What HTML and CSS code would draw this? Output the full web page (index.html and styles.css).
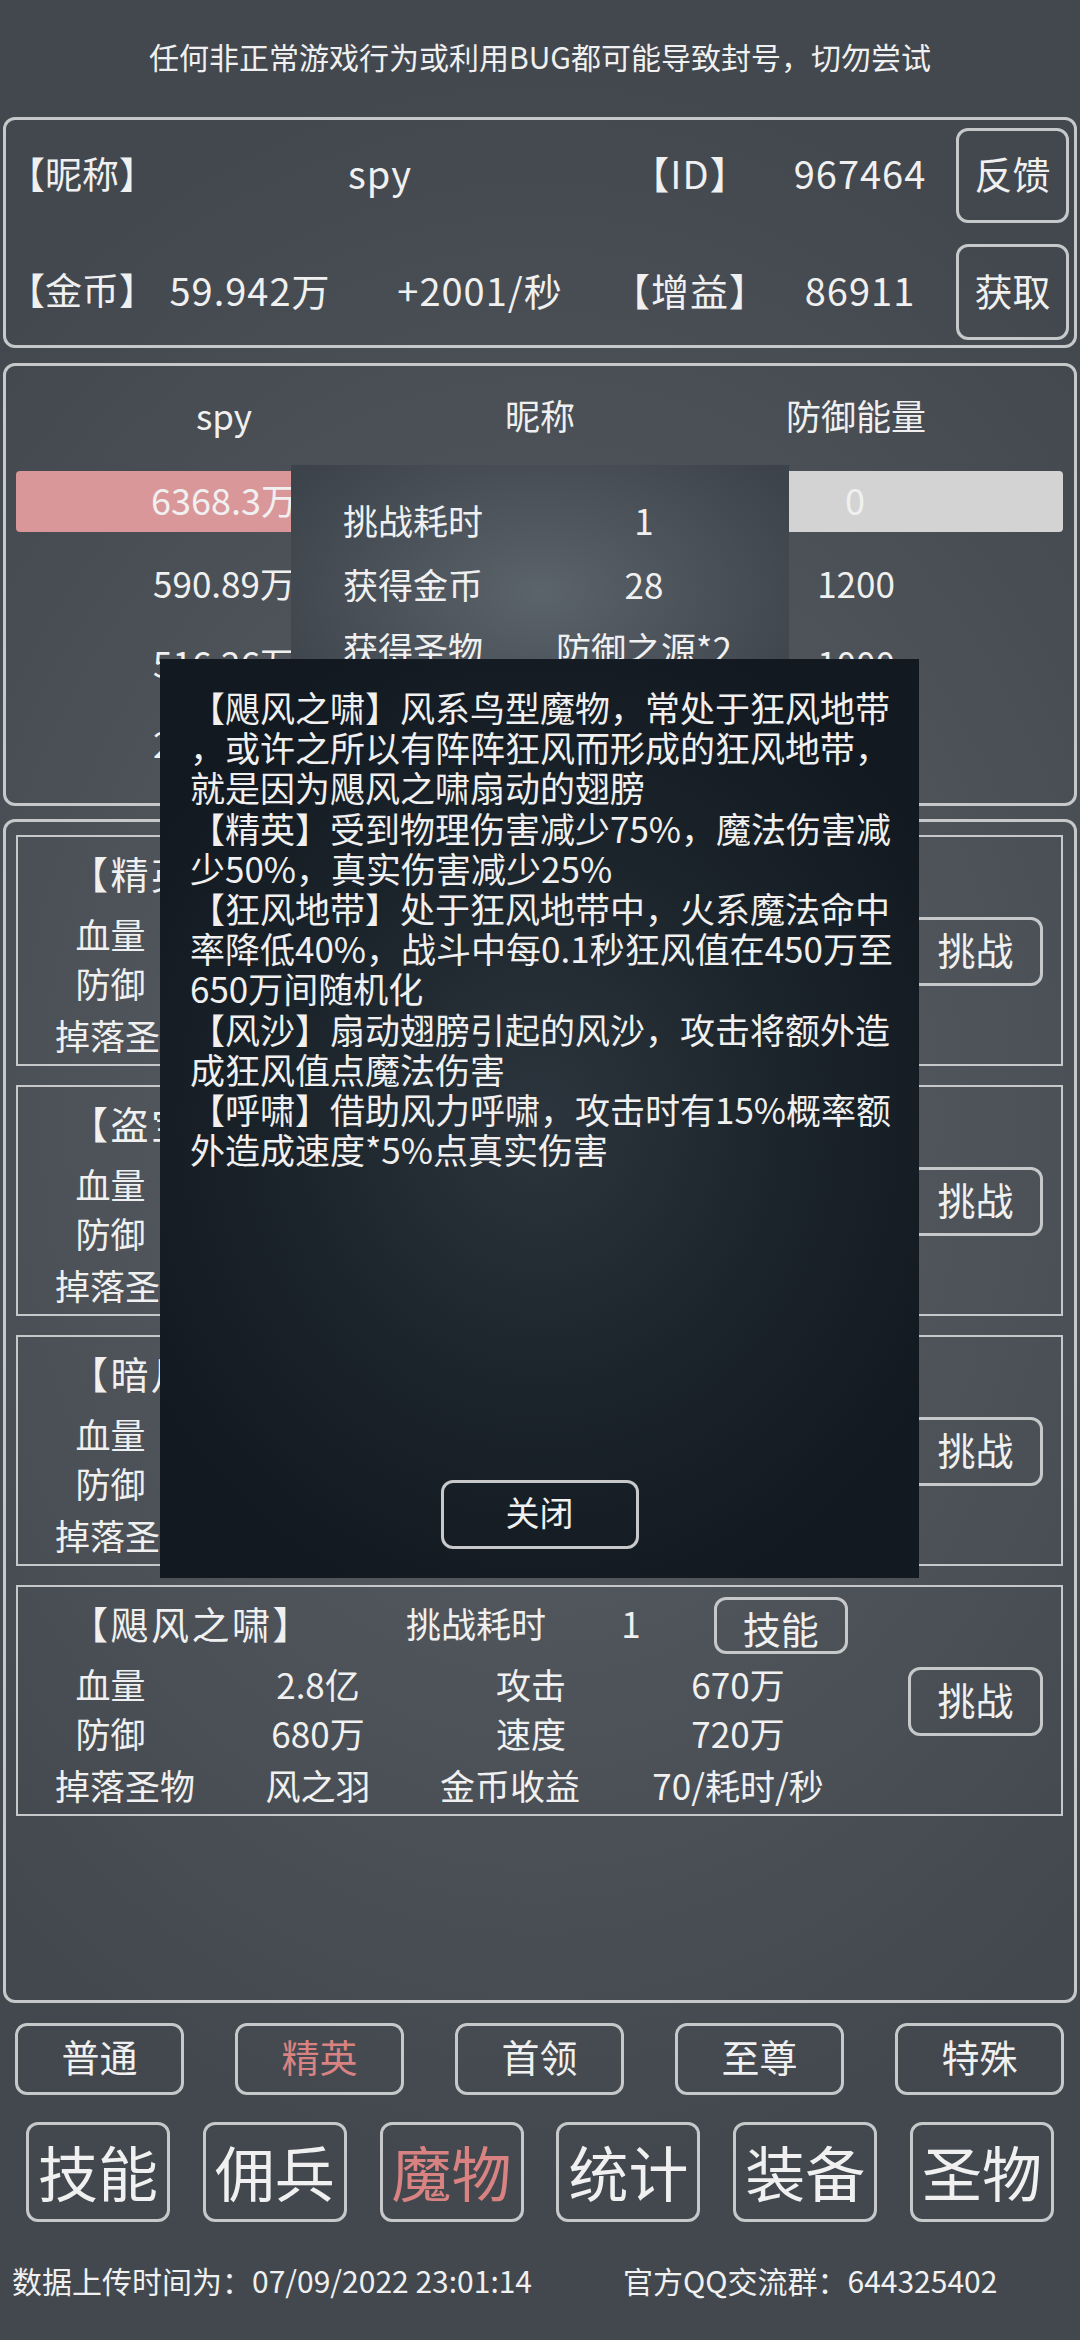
FILE: index.html
```html
<!DOCTYPE html>
<html lang="zh-CN">
<head>
    <meta charset="UTF-8">
    <meta name="viewport" content="width=device-width, initial-scale=1.0">
    <title>魔物</title>
    <link rel="stylesheet" href="styles.css">
</head>
<body>
    <div class="notice">任何非正常游戏行为或利用BUG都可能导致封号，切勿尝试</div>

    <div class="panel info">
        <div class="label">【昵称】</div>
        <div class="val span2">spy</div>
        <div class="val">【ID】</div>
        <div class="val">967464</div>
        <button class="btn side-btn">反馈</button>

        <div class="label">【金币】</div>
        <div class="val">59.942万</div>
        <div class="val">+2001/秒</div>
        <div class="val">【增益】</div>
        <div class="val">86911</div>
        <button class="btn side-btn">获取</button>
    </div>

    <div class="panel battle">
        <div class="b-row head"><div>spy</div><div>昵称</div><div>防御能量</div></div>
        <div class="bars">
            <div class="bar hp">6368.3万</div>
            <div class="bar def">0</div>
        </div>
        <div class="b-row"><div>590.89万</div><div>攻击</div><div>1200</div></div>
        <div class="b-row"><div>516.26万</div><div>防御</div><div>1000</div></div>
        <div class="b-row"><div>268.50万</div><div>速度</div><div>800</div></div>
    </div>

    <div class="panel monsters">
        <div class="card">
            <div class="m-main">
                <div class="m-head">
                    <div class="m-name">【精英骑士】</div>
                    <div class="m-cost">挑战耗时</div>
                    <div class="m-cost-val">1</div>
                    <button class="btn skill-btn">技能</button>
                </div>
                <div class="m-stats">
                    <div class="l1">血量</div><div>9800万</div><div class="l3">攻击</div><div>320万</div>
                    <div class="l1">防御</div><div>300万</div><div class="l3">速度</div><div>280万</div>
                    <div class="drop">掉落圣物</div><div>骑士之盾</div><div class="gold">金币收益</div><div>40/耗时/秒</div>
                </div>
            </div>
            <button class="btn fight-btn">挑战</button>
        </div>

        <div class="card">
            <div class="m-main">
                <div class="m-head">
                    <div class="m-name">【盗宝地精】</div>
                    <div class="m-cost">挑战耗时</div>
                    <div class="m-cost-val">1</div>
                    <button class="btn skill-btn">技能</button>
                </div>
                <div class="m-stats">
                    <div class="l1">血量</div><div>1.2亿</div><div class="l3">攻击</div><div>410万</div>
                    <div class="l1">防御</div><div>390万</div><div class="l3">速度</div><div>520万</div>
                    <div class="drop">掉落圣物</div><div>防御之源</div><div class="gold">金币收益</div><div>50/耗时/秒</div>
                </div>
            </div>
            <button class="btn fight-btn">挑战</button>
        </div>

        <div class="card">
            <div class="m-main">
                <div class="m-head">
                    <div class="m-name">【暗月之影】</div>
                    <div class="m-cost">挑战耗时</div>
                    <div class="m-cost-val">1</div>
                    <button class="btn skill-btn">技能</button>
                </div>
                <div class="m-stats">
                    <div class="l1">血量</div><div>1.9亿</div><div class="l3">攻击</div><div>560万</div>
                    <div class="l1">防御</div><div>510万</div><div class="l3">速度</div><div>600万</div>
                    <div class="drop">掉落圣物</div><div>暗之核</div><div class="gold">金币收益</div><div>60/耗时/秒</div>
                </div>
            </div>
            <button class="btn fight-btn">挑战</button>
        </div>

        <div class="card">
            <div class="m-main">
                <div class="m-head">
                    <div class="m-name">【飓风之啸】</div>
                    <div class="m-cost">挑战耗时</div>
                    <div class="m-cost-val">1</div>
                    <button class="btn skill-btn">技能</button>
                </div>
                <div class="m-stats">
                    <div class="l1">血量</div><div>2.8亿</div><div class="l3">攻击</div><div>670万</div>
                    <div class="l1">防御</div><div>680万</div><div class="l3">速度</div><div>720万</div>
                    <div class="drop">掉落圣物</div><div>风之羽</div><div class="gold">金币收益</div><div>70/耗时/秒</div>
                </div>
            </div>
            <button class="btn fight-btn">挑战</button>
        </div>
    </div>

    <div class="tabs">
        <button class="btn tab">普通</button>
        <button class="btn tab active">精英</button>
        <button class="btn tab">首领</button>
        <button class="btn tab">至尊</button>
        <button class="btn tab">特殊</button>
    </div>

    <div class="nav">
        <button class="btn nav-btn">技能</button>
        <button class="btn nav-btn">佣兵</button>
        <button class="btn nav-btn active">魔物</button>
        <button class="btn nav-btn">统计</button>
        <button class="btn nav-btn">装备</button>
        <button class="btn nav-btn">圣物</button>
    </div>

    <div class="footer">
        <span class="upload">数据上传时间为：07/09/2022 23:01:14</span>
        <span>官方QQ交流群：644325402</span>
    </div>

    <!-- reward popup, sits under the skill popup -->
    <div class="reward">
        <div>挑战耗时</div><div>1</div>
        <div>获得金币</div><div>28</div>
        <div>获得圣物</div><div>防御之源*2</div>
    </div>

    <div class="skill-pop">
        <div class="skill-text">【飓风之啸】风系鸟型魔物，常处于狂风地带<br>，或许之所以有阵阵狂风而形成的狂风地带，<br>就是因为飓风之啸扇动的翅膀<br>【精英】受到物理伤害减少75%，魔法伤害减<br>少50%，真实伤害减少25%<br>【狂风地带】处于狂风地带中，火系魔法命中<br>率降低40%，战斗中每0.1秒狂风值在450万至<br>650万间随机化<br>【风沙】扇动翅膀引起的风沙，攻击将额外造<br>成狂风值点魔法伤害<br>【呼啸】借助风力呼啸，攻击时有15%概率额<br>外造成速度*5%点真实伤害</div>
        <button class="btn close-btn">关闭</button>
    </div>
</body>
</html>
```

FILE: styles.css
```css
html {
    background: #474d53;
}
body {
    margin: 0;
    width: 1080px;
    height: 2340px;
    position: relative;
    overflow: hidden;
    font-family: "Noto Sans CJK SC", "Noto Sans", sans-serif;
    color: #f0f0f0;
    background: radial-gradient(ellipse 75% 45% at 50% 48%, #5a6168 0%, #4d5359 55%, #42484e 100%);
}
.btn {
    font-family: inherit;
    color: #f0f0f0;
    background: transparent;
    border: 3px solid #c6c8ca;
    border-radius: 12px;
    padding: 0 0 6px;
    box-sizing: border-box;
}
.notice {
    height: 117px;
    box-sizing: border-box;
    padding-bottom: 6px;
    display: flex;
    align-items: center;
    justify-content: center;
    font-size: 30px;
}
.panel {
    margin: 0 3px;
    border: 3px solid #c6c8ca;
    border-radius: 12px;
    box-sizing: border-box;
}

/* player info */
.info {
    height: 231px;
    display: grid;
    grid-template-columns: 144px 200px 260px 160px 180px 113px;
    grid-template-rows: 95px 96px;
    row-gap: 21px;
    padding-top: 8px;
    align-items: center;
    font-size: 38px;
    letter-spacing: 1px;
    white-space: nowrap;
}
.info .label {
    padding: 0 0 6px 2px;
    font-size: 37px;
    letter-spacing: 0;
    white-space: normal;
}
.info .val {
    text-align: center;
    padding-bottom: 6px;
}
.info .span2 {
    grid-column: span 2;
}
.side-btn {
    width: 113px;
    height: 100%;
    margin-left: 6px;
    font-size: 38px;
    letter-spacing: 0;
}

/* battle board */
.battle {
    margin-top: 15px;
    height: 443px;
    padding-top: 14px;
    font-size: 35px;
}
.b-row {
    display: grid;
    grid-template-columns: 316px 316px 316px;
    padding-left: 60px;
    height: 80px;
    align-items: center;
    text-align: center;
}
.b-row div {
    padding-bottom: 6px;
}
.b-row.head div {
    padding-bottom: 12px;
}
.bars {
    display: flex;
    justify-content: space-between;
    margin: 11px 11px 13px 10px;
}
.bar {
    width: 416px;
    height: 61px;
    box-sizing: border-box;
    padding-bottom: 6px;
    border-radius: 4px;
    display: flex;
    align-items: center;
    justify-content: center;
    font-size: 36px;
}
.hp {
    background: #d9979a;
}
.def {
    background: #d3d3d3;
}

/* monster list */
.monsters {
    margin-top: 13px;
    height: 1184px;
    padding-top: 13px;
    display: flex;
    flex-direction: column;
    gap: 19px;
    font-size: 35px;
}
.card {
    height: 231px;
    margin: 0 11px 0 10px;
    border: 2px solid #c6c8ca;
    box-sizing: border-box;
    display: flex;
}
.m-main {
    width: 830px;
    white-space: nowrap;
}
.m-head {
    display: flex;
    align-items: center;
    height: 57px;
    margin-top: 10px;
}
.m-head div {
    padding-bottom: 6px;
}
.m-name {
    width: 304px;
    box-sizing: border-box;
    padding-left: 52px;
    font-size: 38px;
    letter-spacing: 2.5px;
}
.m-cost {
    width: 264px;
    margin-left: 27px;
    text-align: center;
}
.m-cost-val {
    width: 50px;
    text-align: center;
}
.skill-btn {
    width: 136px;
    height: 57px;
    margin-left: 58px;
    font-size: 38px;
}
.m-stats {
    margin-top: 7px;
    display: grid;
    grid-template-columns: 200px 200px 210px 220px;
    grid-template-rows: 50px 49px 55px;
    align-items: center;
    text-align: center;
}
.m-stats div {
    padding-bottom: 6px;
}
.m-stats .l1 {
    padding-right: 15px;
}
.m-stats .drop {
    padding-left: 14px;
}
.m-stats .l3 {
    padding-left: 16px;
}
.m-stats .gold {
    padding-right: 26px;
}
.fight-btn {
    width: 135px;
    height: 69px;
    margin: 80px 0 0 60px;
    font-size: 38px;
}

/* bottom menus */
.tabs {
    display: flex;
    justify-content: space-between;
    padding: 0 16px 0 15px;
    margin-top: 20px;
}
.tab {
    width: 169px;
    height: 72px;
    font-size: 38px;
    padding-bottom: 8px;
}
.nav {
    display: flex;
    justify-content: space-between;
    padding: 0 26px;
    margin-top: 27px;
}
.nav-btn {
    width: 144px;
    height: 100px;
    font-size: 60px;
    padding-bottom: 4px;
}
.active {
    color: #d98282;
}
.footer {
    display: flex;
    align-items: center;
    height: 60px;
    margin-top: 28px;
    padding-left: 12px;
    font-size: 30px;
    white-space: nowrap;
}
.upload {
    width: 611px;
}

/* popups */
.reward {
    position: absolute;
    left: 291px;
    top: 465px;
    width: 498px;
    height: 320px;
    padding-top: 25px;
    box-sizing: border-box;
    display: grid;
    grid-template-columns: 244px 218px;
    grid-auto-rows: 64px;
    align-items: center;
    text-align: center;
    font-size: 35px;
    background: radial-gradient(ellipse 60% 60% at 50% 40%, #5b636b 0%, #4a5158 55%, #3c434a 100%);
}
.reward div {
    padding-bottom: 6px;
}
.skill-pop {
    position: absolute;
    left: 160px;
    top: 659px;
    width: 759px;
    height: 919px;
    box-sizing: border-box;
    padding: 28px 20px 29px 30px;
    display: flex;
    flex-direction: column;
    align-items: center;
    background: radial-gradient(ellipse 60% 55% at 50% 50%, #2c353d 0%, #1c242b 55%, #121920 100%);
}
.skill-text {
    align-self: stretch;
    flex: 1;
    font-size: 35px;
    line-height: 40.2px;
    white-space: nowrap;
}
.close-btn {
    width: 198px;
    height: 69px;
    font-size: 34px;
    margin-left: -10px;
}
```
